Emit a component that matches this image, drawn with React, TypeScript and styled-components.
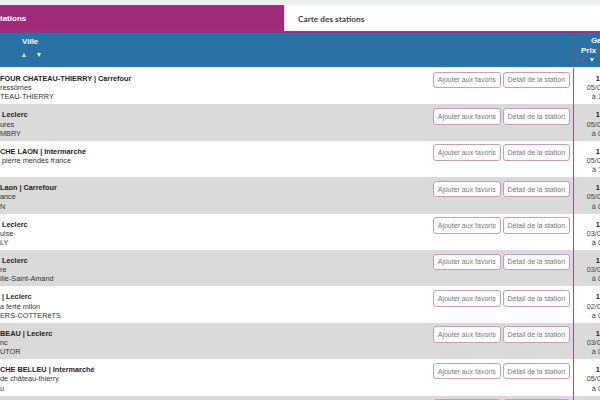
import React from 'react';
import styled, { createGlobalStyle } from 'styled-components';

const GlobalStyle = createGlobalStyle`
    body {
        margin: 0;
        overflow: hidden;
        background: #ffffff;
        font-family: "Liberation Sans", Arial, sans-serif;
    }
`

const Page = styled.div`
    width: 640px;
`
const TopStrip = styled.div`
    height: 5px;
    background: #edefef;
`
const Tabs = styled.nav`
    display: flex;
    height: 26px;
    border-bottom: 2px solid #8a3c82;
`
const Tab = styled.div<{ $active?: boolean }>`
    display: flex;
    align-items: center;
    width: ${p => (p.$active ? '284px' : 'auto')};
    flex: ${p => (p.$active ? 'none' : '1')};
    padding-left: ${p => (p.$active ? '0' : '14px')};
    background: ${p => (p.$active ? '#a2297a' : '#ffffff')};
    color: ${p => (p.$active ? '#ffffff' : '#3d3d3d')};
    font-size: ${p => (p.$active ? '8px' : '8.3px')};
    font-weight: bold;
    font-family: ${p => (p.$active ? '"Liberation Sans", Arial, sans-serif' : 'Lato, "Liberation Sans", sans-serif')};
    padding-top: 1px;
`
const Grid = styled.div`
    display: grid;
    grid-template-columns: 433px 140px 67px;
`
const HeadRow = styled(Grid)`
    height: 34px;
    background: #2872a5;
    color: #ffffff;
    font-weight: bold;
    font-size: 8px;
    border-bottom: 1px solid #e4e9ee;
`
const HeadCell = styled.div<{ $price?: boolean }>`
    display: flex;
    flex-direction: column;
    align-items: ${p => (p.$price ? 'stretch' : 'flex-start')};
    padding: ${p => (p.$price ? '3px 0 0 0' : '4px 0 0 22px')};
    border-left: ${p => (p.$price ? '1px solid #7b4a8c' : 'none')};
    line-height: 9.5px;
`
const Centered = styled.span`
    text-align: center;
    padding-right: 6px;
`
const SubHead = styled.span`
    padding-left: 7px;
    line-height: 10px;
`
const Sorters = styled.div<{ $gap: number; $pad: number }>`
    display: flex;
    gap: ${p => p.$gap}px;
    margin-top: ${p => p.$pad}px;
    padding-left: ${p => (p.$gap < 8 ? '7px' : '0')};
`
const Arrow = styled.span<{ $down?: boolean; $color?: string }>`
    width: 0;
    height: 0;
    border-left: 2.8px solid transparent;
    border-right: 2.8px solid transparent;
    ${p => (p.$down ? 'border-top' : 'border-bottom')}: 4px solid ${p => p.$color || '#ffffff'};
`
const Row = styled(Grid)<{ $alt?: boolean }>`
    height: 36.4px;
    background: ${p => (p.$alt ? '#dadada' : '#ffffff')};
    font-size: 7.3px;
    line-height: 9.2px;
    color: #333333;
`
const Info = styled.div`
    padding-top: 6px;
    white-space: pre;
    b {
        color: #1e1e1e;
    }
`
const Actions = styled.div`
    display: flex;
    align-items: flex-start;
    gap: 2px;
    padding-top: 3.7px;
`
const Button = styled.button`
    height: 16.6px;
    width: 67.5px;
    padding: 0;
    background: #ffffff;
    border: 1.2px solid #c99bb8;
    border-radius: 3px;
    color: #777777;
    font-family: "Liberation Sans", Arial, sans-serif;
    font-size: 7px;
`
const Price = styled.div`
    display: flex;
    flex-direction: column;
    align-items: center;
    padding: 6px 4px 0 0;
    border-left: 1px solid #8e5a8a;
    color: #444444;
    b {
        color: #1e1e1e;
    }
`

type Station = { title: string; street: string; city: string; date: string; time: string }

const stations: Station[] = [
    { title: 'FOUR CHATEAU-THIERRY | Carrefour', street: 'ressômes', city: 'TEAU-THIERRY', date: '05/03/2024', time: 'à 10h50' },
    { title: '\u00a0Leclerc', street: 'ures', city: 'MBRY', date: '05/03/2024', time: 'à 07h30' },
    { title: 'CHE LAON | Intermarché', street: '\u00a0pierre mendès france', city: '', date: '05/03/2024', time: 'à 11h05' },
    { title: 'Laon | Carrefour', street: 'ance', city: 'N', date: '05/03/2024', time: 'à 08h12' },
    { title: '\u00a0Leclerc', street: 'uise', city: 'LY', date: '03/03/2024', time: 'à 09h40' },
    { title: '\u00a0Leclerc', street: 're', city: 'ille-Saint-Amand', date: '03/03/2024', time: 'à 07h25' },
    { title: '\u00a0| Leclerc', street: 'a ferté milon', city: 'ERS-COTTERêTS', date: '02/03/2024', time: 'à 09h15' },
    { title: 'BEAU | Leclerc', street: 'nc', city: 'UTOR', date: '03/03/2024', time: 'à 08h00' },
    { title: 'CHE BELLEU | Intermarché', street: 'de château-thierry', city: 'u', date: '05/03/2024', time: 'à 06h45' },
    { title: 'SAINT-QUENTIN | Leclerc', street: 'rue', city: 'NTIN', date: '04/03/2024', time: 'à 10h10' },
]

function App(): JSX.Element {
    return (
        <>
            <GlobalStyle />
            <Page>
                <TopStrip />
                <Tabs>
                    <Tab $active>tations</Tab>
                    <Tab>Carte des stations</Tab>
                </Tabs>
                <HeadRow>
                    <HeadCell>
                        <span>Ville</span>
                        <Sorters $gap={11} $pad={6}>
                            <Arrow />
                            <Arrow $down />
                        </Sorters>
                    </HeadCell>
                    <div />
                    <HeadCell $price>
                        <Centered>Gazole</Centered>
                        <SubHead>Prix</SubHead>
                        <Sorters $gap={5} $pad={2}>
                            <Arrow $color="#c2337e" />
                            <Arrow $down />
                        </Sorters>
                    </HeadCell>
                </HeadRow>
                {stations.map((s, i) => (
                    <Row key={i} $alt={i % 2 === 1}>
                        <Info>
                            <b>{s.title}</b>
                            {'\n' + s.street + '\n' + s.city}
                        </Info>
                        <Actions>
                            <Button>Ajouter aux favoris</Button>
                            <Button>Détail de la station</Button>
                        </Actions>
                        <Price>
                            <b>1.859</b>
                            <span>{s.date}</span>
                            <span>{s.time}</span>
                        </Price>
                    </Row>
                ))}
            </Page>
        </>
    )
}

export default App;
